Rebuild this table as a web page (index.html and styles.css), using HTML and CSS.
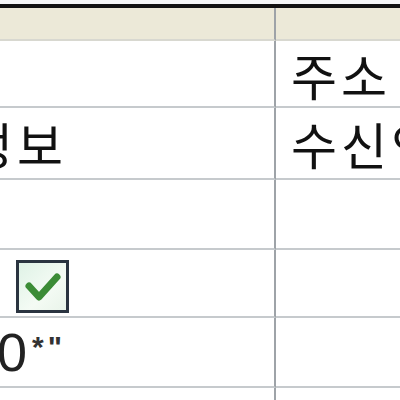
FILE: index.html
```html
<!DOCTYPE html>
<html>
<head>
<meta charset="utf-8">
<link rel="stylesheet" href="styles.css">
</head>
<body>
<div class="sheet">
  <div class="grid">
    <div class="cell head left"></div>
    <div class="cell head"></div>

    <div class="cell r1 left"></div>
    <div class="cell r1 ko">주소</div>

    <div class="cell r2 left ko clipped">정보</div>
    <div class="cell r2 ko">수신인</div>

    <div class="cell r3 left"></div>
    <div class="cell r3"></div>

    <div class="cell r4 left check-cell">
      <span class="checkbox">
        <svg width="46" height="47" viewBox="0 0 46 47">
          <path d="M10 23 L20 34 L38 14" fill="none" stroke="#3b8c36" stroke-width="7" stroke-linecap="round" stroke-linejoin="round"/>
        </svg>
      </span>
    </div>
    <div class="cell r4"></div>

    <div class="cell r5 left num">0<span class="sym">*"</span></div>
    <div class="cell r5"></div>

    <div class="cell r6 left"></div>
    <div class="cell r6"></div>
  </div>
</div>
</body>
</html>
```

FILE: styles.css
```css
html, body {
  margin: 0;
  padding: 0;
  background: #ffffff;
  overflow: hidden;
}
.sheet {
  width: 400px;
  height: 400px;
  padding-top: 4px;
  background: #f4f5f6;
  box-sizing: border-box;
  overflow: hidden;
}
.grid {
  display: grid;
  grid-template-columns: 276px 1fr;
  grid-template-rows: 33px 67px 72px 70px 68px 70px 20px;
  border-top: 4px solid #111111;
  background: #ffffff;
}
.cell {
  border-bottom: 2px solid #c6cacd;
  display: flex;
  align-items: center;
  overflow: hidden;
  white-space: nowrap;
  font-family: "Noto Sans CJK KR", "Noto Sans", sans-serif;
  color: #111111;
}
.left {
  border-right: 2px solid #9ea3a8;
}
.head {
  background: #ece9d8;
  border-bottom: 2px solid #d8d8d0;
}
.ko {
  font-size: 50px;
  font-weight: 400;
  line-height: 1;
  padding-left: 15px;
  letter-spacing: 4px;
}
.clipped {
  padding-left: 0;
  margin-left: -33px;
}
.check-cell {
  padding-left: 16px;
  padding-top: 10px;
  align-items: flex-start;
}
.checkbox {
  display: block;
  width: 47px;
  height: 47px;
  border: 3px solid #2a3440;
  background: linear-gradient(135deg, #dff2e6, #f4fbf4 60%, #e9f4ea);
}
.checkbox svg {
  display: block;
}
.num {
  font-family: "Liberation Sans", Arial, sans-serif;
  font-size: 54px;
  line-height: 1;
  margin-left: -3px;
  color: #222222;
}
.sym {
  font-size: 30px;
  font-weight: bold;
  align-self: flex-start;
  margin-top: 14px;
  margin-left: 5px;
  letter-spacing: 4px;
  color: #333333;
}
```
